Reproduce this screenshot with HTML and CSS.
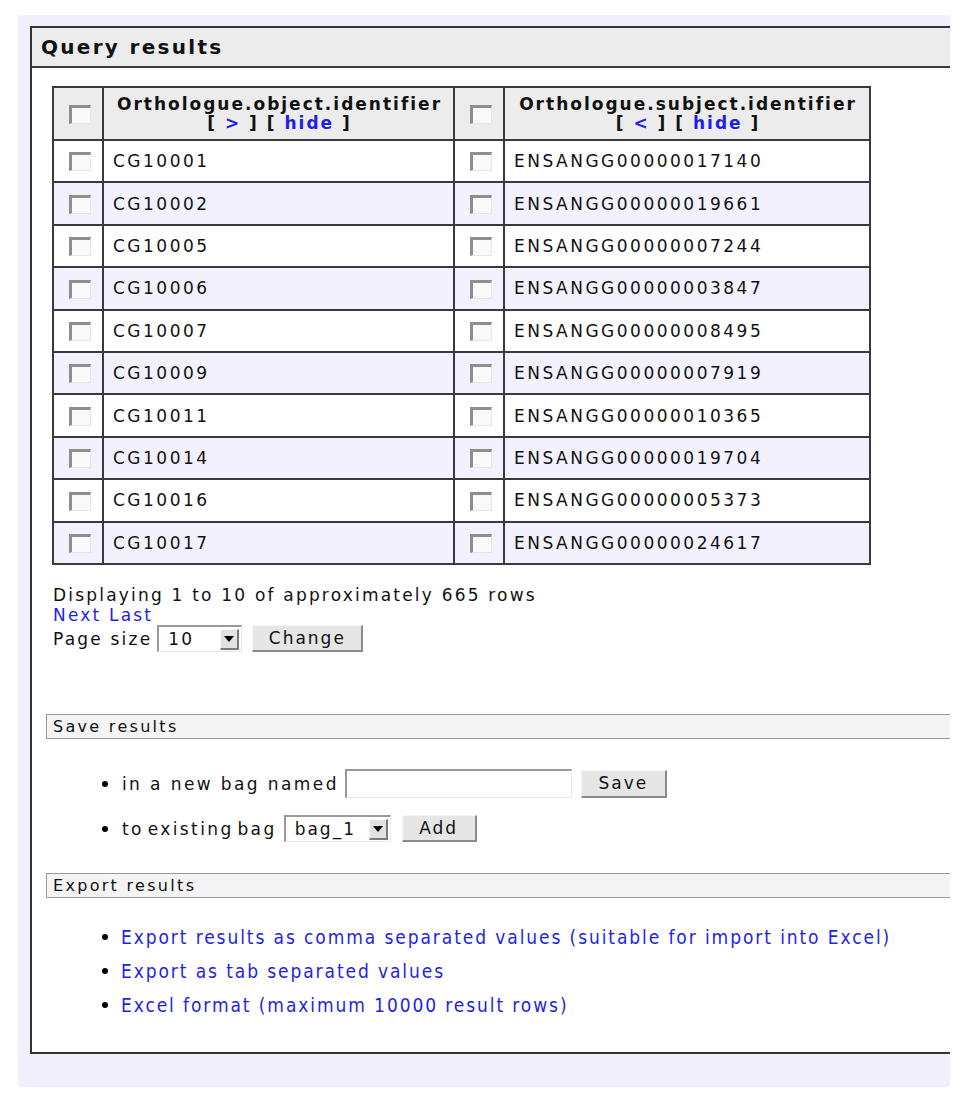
FILE: index.html
```html
<!DOCTYPE html>
<html>
<head>
<meta charset="utf-8">
<title>Query results</title>
<link rel="stylesheet" href="styles.css">
</head>
<body>
<div class="page">
  <div class="box">
    <div class="box-head">Query results</div>
    <div class="box-body">
      <table class="results">
        <colgroup><col class="c-cb"><col class="c-obj"><col class="c-cb"><col class="c-sub"></colgroup>
        <thead>
          <tr>
            <th class="cbcell"><input type="checkbox" class="cb"></th>
            <th class="colhead">Orthologue.object.identifier<br><span class="br">[ <a href="#">&gt;</a> ] [ <a href="#">hide</a> ]</span></th>
            <th class="cbcell"><input type="checkbox" class="cb"></th>
            <th class="colhead">Orthologue.subject.identifier<br><span class="br">[ <a href="#">&lt;</a> ] [ <a href="#">hide</a> ]</span></th>
          </tr>
        </thead>
        <tbody>
          <tr><td class="cbcell"><input type="checkbox" class="cb"></td><td>CG10001</td><td class="cbcell"><input type="checkbox" class="cb"></td><td>ENSANGG00000017140</td></tr>
          <tr class="alt"><td class="cbcell"><input type="checkbox" class="cb"></td><td>CG10002</td><td class="cbcell"><input type="checkbox" class="cb"></td><td>ENSANGG00000019661</td></tr>
          <tr><td class="cbcell"><input type="checkbox" class="cb"></td><td>CG10005</td><td class="cbcell"><input type="checkbox" class="cb"></td><td>ENSANGG00000007244</td></tr>
          <tr class="alt"><td class="cbcell"><input type="checkbox" class="cb"></td><td>CG10006</td><td class="cbcell"><input type="checkbox" class="cb"></td><td>ENSANGG00000003847</td></tr>
          <tr><td class="cbcell"><input type="checkbox" class="cb"></td><td>CG10007</td><td class="cbcell"><input type="checkbox" class="cb"></td><td>ENSANGG00000008495</td></tr>
          <tr class="alt"><td class="cbcell"><input type="checkbox" class="cb"></td><td>CG10009</td><td class="cbcell"><input type="checkbox" class="cb"></td><td>ENSANGG00000007919</td></tr>
          <tr><td class="cbcell"><input type="checkbox" class="cb"></td><td>CG10011</td><td class="cbcell"><input type="checkbox" class="cb"></td><td>ENSANGG00000010365</td></tr>
          <tr class="alt"><td class="cbcell"><input type="checkbox" class="cb"></td><td>CG10014</td><td class="cbcell"><input type="checkbox" class="cb"></td><td>ENSANGG00000019704</td></tr>
          <tr><td class="cbcell"><input type="checkbox" class="cb"></td><td>CG10016</td><td class="cbcell"><input type="checkbox" class="cb"></td><td>ENSANGG00000005373</td></tr>
          <tr class="alt"><td class="cbcell"><input type="checkbox" class="cb"></td><td>CG10017</td><td class="cbcell"><input type="checkbox" class="cb"></td><td>ENSANGG00000024617</td></tr>
        </tbody>
      </table>

      <div class="paging">
        <div class="line">Displaying 1 to 10 of approximately 665 rows</div>
        <div class="line"><a href="#">Next</a> <a href="#">Last</a></div>
        <div class="controls">
          <span>Page size</span>
          <span class="select sel-size"><span class="sel-val">10</span><span class="sel-btn"><span class="tri"></span></span></span>
          <button class="btn btn-change">Change</button>
        </div>
      </div>

      <div class="bar bar-save">Save results</div>
      <ul class="bullets save-list">
        <li>
          <span>in a new bag named</span>
          <input type="text" class="textin">
          <button class="btn btn-save">Save</button>
        </li>
        <li>
          <span class="tight">to existing bag</span>
          <span class="select sel-bag"><span class="sel-val">bag_1</span><span class="sel-btn"><span class="tri"></span></span></span>
          <button class="btn btn-add">Add</button>
        </li>
      </ul>

      <div class="bar bar-export">Export results</div>
      <ul class="bullets export-list">
        <li><a href="#">Export results as comma separated values (suitable for import into Excel)</a></li>
        <li><a href="#">Export as tab separated values</a></li>
        <li><a href="#">Excel format (maximum 10000 result rows)</a></li>
      </ul>
    </div>
  </div>
</div>
</body>
</html>
```

FILE: styles.css
```css
html, body {
  margin: 0;
  padding: 0;
  background: #ffffff;
}

body {
  font-family: "DejaVu Sans", sans-serif;
  font-size: 17px;
  letter-spacing: 2.2px;
  color: #111;
}

a {
  color: #1f1fe6;
  text-decoration: none;
}

.page {
  margin: 15px 0 0 18px;
  width: 932px;
  background: #f2effd;
  padding: 11px 0 33px 12px;
  box-sizing: border-box;
  overflow: hidden;
}

.box {
  width: 960px;
  background: #ffffff;
  border: 2px solid #333333;
  border-right: none;
}

.box-head {
  height: 38px;
  line-height: 38px;
  background: #ececec;
  border-bottom: 2px solid #3a3a3a;
  padding-left: 9px;
  font-weight: bold;
  font-size: 20px;
  letter-spacing: 2.3px;
  color: #111;
}

.box-body {
  padding: 18px 0 30px 0;
}

/* results table */
.results {
  margin-left: 20px;
  border-collapse: collapse;
  table-layout: fixed;
  width: 817px;
  border: 2px solid #3a3a3a;
}

.c-cb { width: 50px; }
.c-obj { width: 351px; }
.c-sub { width: 366px; }

.results th,
.results td {
  border: 2px solid #3a3a3a;
  padding: 0 0 0 9px;
  vertical-align: middle;
}

.results thead tr {
  height: 53px;
  background: #ececec;
}

.results tbody tr {
  height: 42.4px;
  background: #ffffff;
}

.results tbody tr.alt {
  background: #f3f1fe;
}

.results td {
  font-size: 17px;
  letter-spacing: 2.5px;
}

.results th.colhead {
  padding: 1px 0 0 2px;
  text-align: center;
  font-weight: bold;
  font-size: 17px;
  letter-spacing: 2px;
  line-height: 19px;
}

.results .cbcell {
  padding: 0;
  text-align: center;
}

.cb {
  -webkit-appearance: none;
  appearance: none;
  display: inline-block;
  vertical-align: middle;
  width: 22px;
  height: 19px;
  margin: 0 0 0 3px;
  box-sizing: border-box;
  border-top: 3px solid #8e8e8e;
  border-left: 3px solid #8e8e8e;
  border-right: 1px solid #e6e6e6;
  border-bottom: 1px solid #e6e6e6;
  background: #f9f9f9;
}

/* paging */
.paging {
  margin-top: 20px;
  margin-left: 21px;
}

.paging .line {
  line-height: 20px;
}

.controls {
  display: flex;
  align-items: center;
  height: 28px;
}

.select {
  display: inline-flex;
  align-items: center;
  justify-content: space-between;
  box-sizing: border-box;
  height: 27px;
  background: #ffffff;
  border-top: 2px solid #9a9a9a;
  border-left: 2px solid #9a9a9a;
  border-right: 1px solid #e8e8e8;
  border-bottom: 1px solid #e8e8e8;
  padding: 0 2px 0 9px;
}

.sel-size {
  width: 85px;
  margin-left: 5px;
}

.sel-bag {
  width: 107px;
  margin-left: 7px;
  letter-spacing: 2px;
}

.sel-btn {
  width: 19px;
  height: 21px;
  box-sizing: border-box;
  background: #e2e2e2;
  border-top: 1px solid #f8f8f8;
  border-left: 1px solid #f8f8f8;
  border-right: 2px solid #7a7a7a;
  border-bottom: 2px solid #7a7a7a;
  display: flex;
  align-items: center;
  justify-content: center;
}

.tri {
  width: 0;
  height: 0;
  border-left: 5px solid transparent;
  border-right: 5px solid transparent;
  border-top: 6px solid #000;
}

.btn {
  font-family: "DejaVu Sans", sans-serif;
  font-size: 17px;
  letter-spacing: 2px;
  color: #111;
  height: 27px;
  box-sizing: border-box;
  background: #e6e6e6;
  border-top: 1px solid #f6f6f6;
  border-left: 1px solid #f6f6f6;
  border-right: 2px solid #8a8a8a;
  border-bottom: 2px solid #8a8a8a;
  padding: 0;
  margin: 0;
}

.btn-change {
  width: 111px;
  margin-left: 10px;
}

.btn-save {
  width: 86px;
  height: 28px;
  margin-left: 9px;
}

.btn-add {
  width: 75px;
  margin-left: 11px;
}

/* section bars */
.bar {
  margin-left: 14px;
  height: 25px;
  line-height: 23px;
  box-sizing: border-box;
  background: #f4f4f4;
  border-top: 1px solid #999;
  border-bottom: 1px solid #999;
  border-left: 1px solid #999;
  padding-left: 6px;
  font-size: 16px;
  letter-spacing: 2.3px;
  color: #111;
}

.bar-save {
  margin-top: 61px;
}

.bullets {
  list-style: none;
  margin: 0;
  padding: 0 0 0 70px;
}

.bullets li {
  display: flex;
  align-items: center;
}

.bullets li::before {
  content: "";
  width: 6px;
  height: 6px;
  border-radius: 50%;
  background: #000;
  margin-right: 14px;
  flex: none;
}

.save-list {
  padding-top: 30px;
  padding-bottom: 29px;
  letter-spacing: 2.4px;
}

.save-list li {
  height: 30px;
}

.save-list li + li {
  margin-top: 15px;
}

.tight {
  word-spacing: -4px;
}

.textin {
  -webkit-appearance: none;
  appearance: none;
  width: 227px;
  height: 29px;
  box-sizing: border-box;
  margin: 0 0 0 6px;
  background: #fff;
  border-top: 2px solid #9a9a9a;
  border-left: 2px solid #9a9a9a;
  border-right: 1px solid #e8e8e8;
  border-bottom: 1px solid #e8e8e8;
  padding: 0;
}

.export-list {
  padding-top: 22px;
}

.export-list li {
  height: 34px;
  font-family: "DejaVu Sans Condensed", "DejaVu Sans", sans-serif;
  font-stretch: condensed;
  font-size: 19px;
  letter-spacing: 1.9px;
}

.export-list li::before {
  margin-right: 13px;
}
```
